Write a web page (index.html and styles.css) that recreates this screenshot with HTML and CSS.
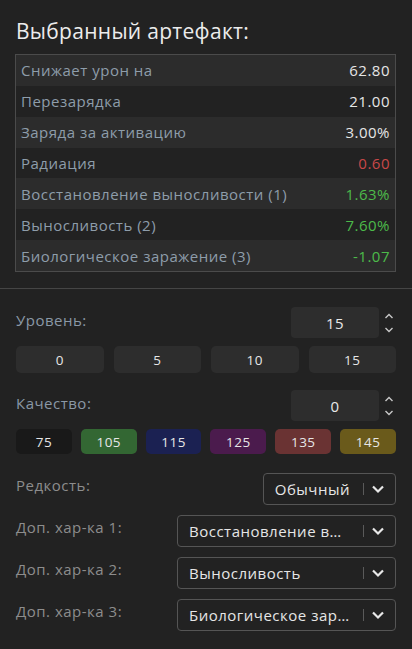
FILE: index.html
```html
<!DOCTYPE html>
<html lang="ru">
<head>
<meta charset="utf-8">
<link rel="stylesheet" href="styles.css">
</head>
<body>
<div class="top">
  <h1 class="title">Выбранный артефакт:</h1>
  <div class="stats">
    <div class="row"><span class="lbl">Снижает урон на</span><span class="val">62.80</span></div>
    <div class="row"><span class="lbl">Перезарядка</span><span class="val">21.00</span></div>
    <div class="row"><span class="lbl">Заряда за активацию</span><span class="val">3.00%</span></div>
    <div class="row"><span class="lbl">Радиация</span><span class="val red">0.60</span></div>
    <div class="row"><span class="lbl">Восстановление выносливости (1)</span><span class="val green">1.63%</span></div>
    <div class="row"><span class="lbl">Выносливость (2)</span><span class="val green">7.60%</span></div>
    <div class="row"><span class="lbl">Биологическое заражение (3)</span><span class="val green">-1.07</span></div>
  </div>
</div>
<hr class="sep">
<div class="controls">
  <div class="field-row">
    <span class="flabel blue">Уровень:</span>
    <div class="num">
      <div class="num-box">15</div>
      <div class="spin">
        <svg width="10" height="8" viewBox="0 0 10 8"><path d="M1.5 6 L5 2.5 L8.5 6" fill="none" stroke="#c8c8c8" stroke-width="1.4"/></svg>
        <svg width="10" height="8" viewBox="0 0 10 8"><path d="M1.5 2 L5 5.5 L8.5 2" fill="none" stroke="#c8c8c8" stroke-width="1.4"/></svg>
      </div>
    </div>
  </div>
  <div class="btns four">
    <div class="btn">0</div><div class="btn">5</div><div class="btn">10</div><div class="btn">15</div>
  </div>
  <div class="field-row q">
    <span class="flabel blue">Качество:</span>
    <div class="num">
      <div class="num-box">0</div>
      <div class="spin">
        <svg width="10" height="8" viewBox="0 0 10 8"><path d="M1.5 6 L5 2.5 L8.5 6" fill="none" stroke="#c8c8c8" stroke-width="1.4"/></svg>
        <svg width="10" height="8" viewBox="0 0 10 8"><path d="M1.5 2 L5 5.5 L8.5 2" fill="none" stroke="#c8c8c8" stroke-width="1.4"/></svg>
      </div>
    </div>
  </div>
  <div class="btns six">
    <div class="btn c75">75</div><div class="btn c105">105</div><div class="btn c115">115</div><div class="btn c125">125</div><div class="btn c135">135</div><div class="btn c145">145</div>
  </div>
  <div class="sel-row first">
    <span class="flabel">Редкость:</span>
    <div class="select small"><span class="sel-text">Обычный</span><span class="bar"></span><svg class="chev" width="14" height="10" viewBox="0 0 14 10"><path d="M2 2.5 L7 7.5 L12 2.5" fill="none" stroke="#e8e8e8" stroke-width="2.2"/></svg></div>
  </div>
  <div class="sel-row">
    <span class="flabel">Доп. хар-ка 1:</span>
    <div class="select"><span class="sel-text">Восстановление выносливости</span><span class="bar"></span><svg class="chev" width="14" height="10" viewBox="0 0 14 10"><path d="M2 2.5 L7 7.5 L12 2.5" fill="none" stroke="#e8e8e8" stroke-width="2.2"/></svg></div>
  </div>
  <div class="sel-row">
    <span class="flabel">Доп. хар-ка 2:</span>
    <div class="select"><span class="sel-text">Выносливость</span><span class="bar"></span><svg class="chev" width="14" height="10" viewBox="0 0 14 10"><path d="M2 2.5 L7 7.5 L12 2.5" fill="none" stroke="#e8e8e8" stroke-width="2.2"/></svg></div>
  </div>
  <div class="sel-row">
    <span class="flabel">Доп. хар-ка 3:</span>
    <div class="select"><span class="sel-text">Биологическое заражение</span><span class="bar"></span><svg class="chev" width="14" height="10" viewBox="0 0 14 10"><path d="M2 2.5 L7 7.5 L12 2.5" fill="none" stroke="#e8e8e8" stroke-width="2.2"/></svg></div>
  </div>
</div>
</body>
</html>
```
FILE: styles.css
```css
html, body {
  margin: 0;
  padding: 0;
  background: #222222;
  font-family: "Open Sans", "Noto Sans", sans-serif;
  color: #e2e2e2;
  letter-spacing: 0.5px;
}
.top {
  padding: 18px 16px 0 15px;
}
.title {
  margin: 0 0 10px 1px;
  font-size: 21px;
  line-height: 26px;
  font-weight: 400;
  color: #ececec;
  letter-spacing: 0.3px;
}
.stats {
  border: 1px solid #4b4b4b;
  display: grid;
  grid-template-rows: repeat(7, 1fr);
  height: 216px;
}
.row {
  display: flex;
  align-items: center;
  justify-content: space-between;
  padding: 0 5px 0 5px;
  font-size: 15px;
}
.row:nth-child(odd) { background: #2c2c2c; }
.row:nth-child(even) { background: #222222; }
.lbl { color: #8e9daa; }
.val { color: #e6e6e6; }
.val.red { color: #c84848; }
.val.green { color: #4cba4a; }
.sep {
  margin: 16px 0 0 0;
  border: 0;
  border-top: 1px solid #454545;
  height: 0;
}
.controls {
  padding: 18px 16px 0 16px;
}
.field-row {
  display: flex;
  justify-content: space-between;
  align-items: flex-start;
}
.flabel {
  font-size: 15px;
  color: #8d8d8d;
}
.flabel.blue { color: #8a98a6; }
.field-row .flabel { margin-top: 3px; }
.num {
  display: flex;
  align-items: center;
  gap: 3px;
}
.num-box {
  width: 88px;
  height: 31px;
  background: #2d2d2d;
  border-radius: 4px;
  display: flex;
  align-items: center;
  justify-content: center;
  font-size: 15px;
  color: #e8e8e8;
}
.spin {
  display: flex;
  flex-direction: column;
  gap: 6px;
  width: 14px;
  align-items: center;
}
.spin svg { display: block; }
.btns {
  display: grid;
  margin-top: 8px;
}
.btns.four {
  grid-template-columns: repeat(4, 1fr);
  gap: 10px;
}
.btns.six {
  grid-template-columns: repeat(6, 1fr);
  gap: 9px;
}
.btn {
  height: 27px;
  border-radius: 5px;
  background: #2d2d2d;
  display: flex;
  align-items: center;
  justify-content: center;
  font-size: 13.5px;
  color: #e6e6e6;
}
.btns.six .btn { height: 25px; }
.field-row.q { margin-top: 17px; }
.c75 { background: #191919; }
.c105 { background: #336733; }
.c115 { background: #1b2152; }
.c125 { background: #4b1b4d; }
.c135 { background: #6a3333; }
.c145 { background: #6a5a1b; }
.sel-row {
  display: flex;
  justify-content: space-between;
  align-items: center;
  margin-top: 10px;
}
.sel-row.first { margin-top: 19px; }
.sel-row .flabel { margin-bottom: 8px; }
.select {
  width: 219px;
  height: 32px;
  box-sizing: border-box;
  border: 1px solid #555555;
  border-radius: 4px;
  display: flex;
  align-items: center;
  padding: 0 10px 0 11px;
  background: #222222;
}
.select.small { width: 133px; justify-content: flex-end; padding-left: 2px; }
.sel-text {
  font-size: 15px;
  color: #e6e6e6;
  white-space: nowrap;
  overflow: hidden;
  text-overflow: ellipsis;
  flex: 1;
  min-width: 0;
}
.select.small .sel-text { flex: 0 0 auto; }
.bar {
  width: 1px;
  height: 12px;
  background: #5a5a5a;
  margin: 0 7px 0 13px;
  flex: none;
}
.chev { flex: none; display: block; }
```
